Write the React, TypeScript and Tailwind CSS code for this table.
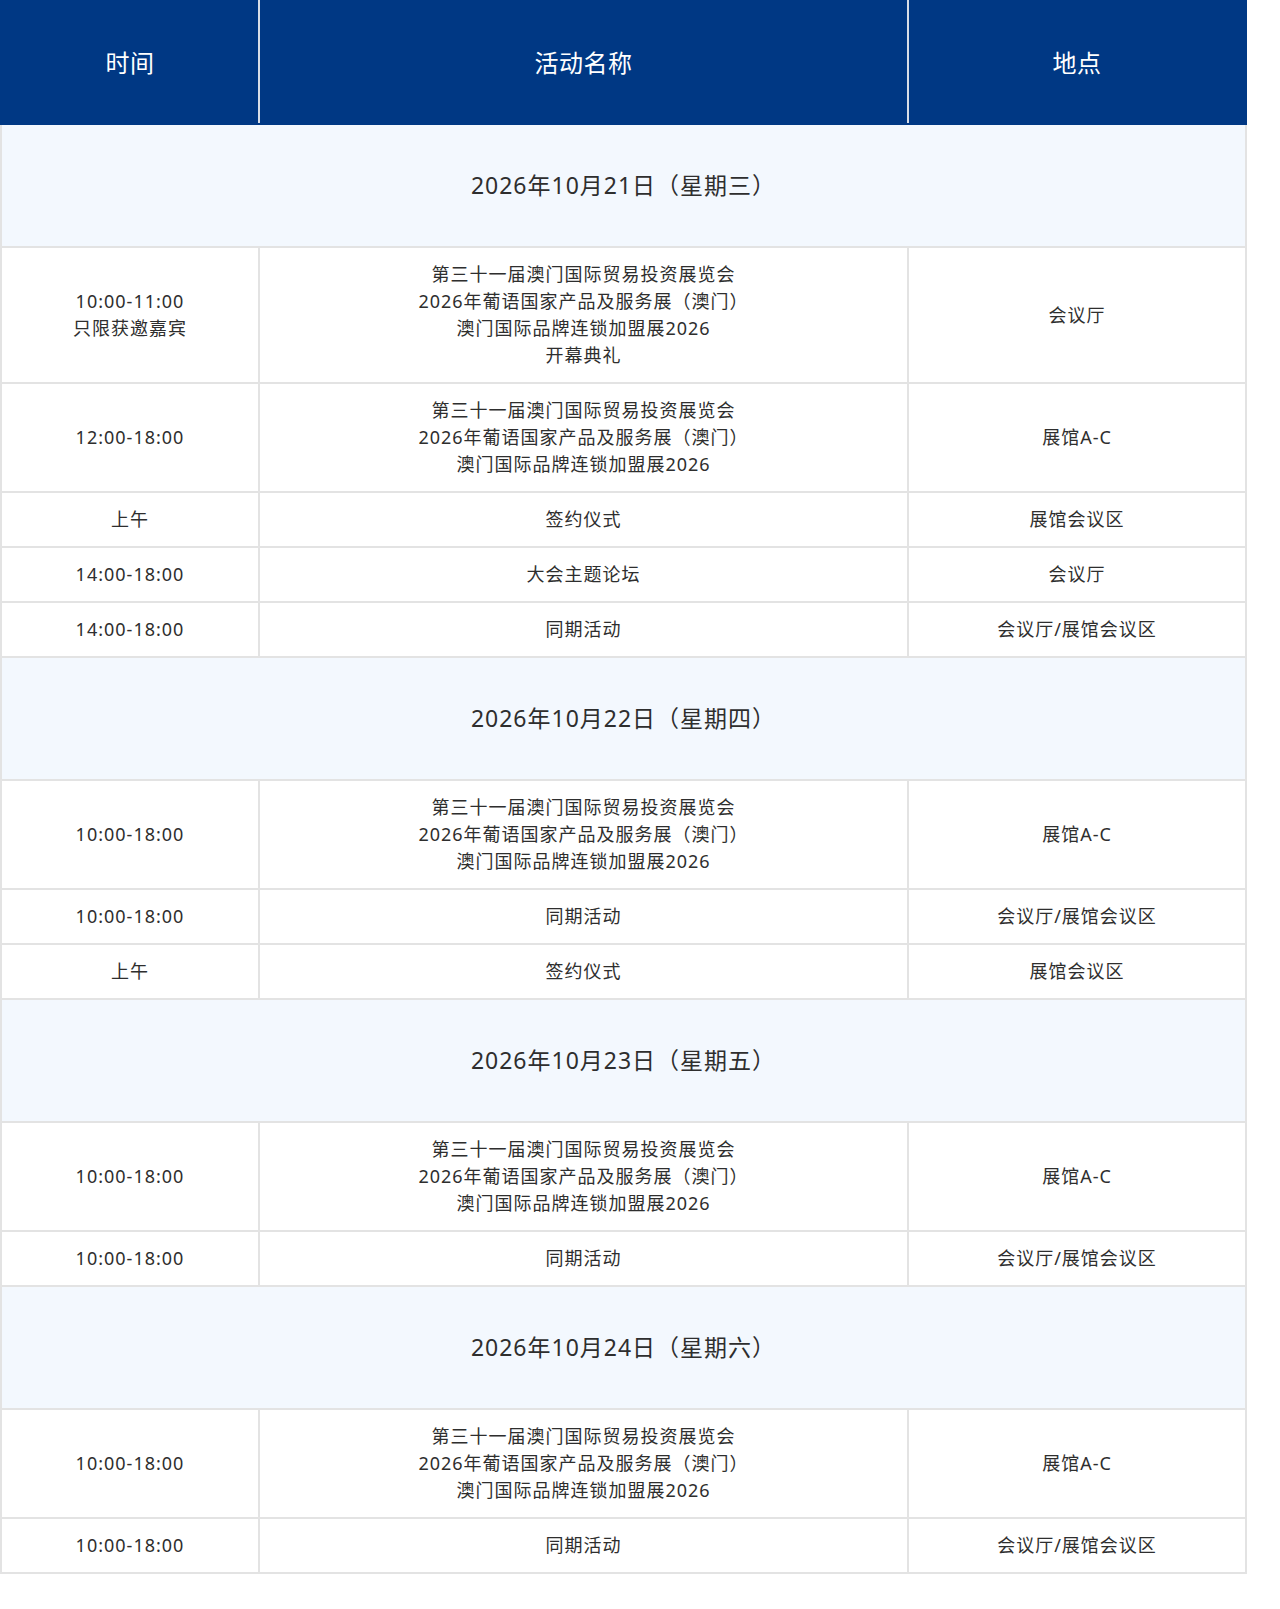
import React from 'react';

type Row = { time: string[]; name: string[]; place: string };
type Day = { date: string; rows: Row[] };

const EXPO = ['第三十一届澳门国际贸易投资展览会', '2026年葡语国家产品及服务展（澳门）', '澳门国际品牌连锁加盟展2026'];

const days: Day[] = [
  {
    date: '2026年10月21日（星期三）',
    rows: [
      { time: ['10:00-11:00', '只限获邀嘉宾'], name: [...EXPO, '开幕典礼'], place: '会议厅' },
      { time: ['12:00-18:00'], name: EXPO, place: '展馆A-C' },
      { time: ['上午'], name: ['签约仪式'], place: '展馆会议区' },
      { time: ['14:00-18:00'], name: ['大会主题论坛'], place: '会议厅' },
      { time: ['14:00-18:00'], name: ['同期活动'], place: '会议厅/展馆会议区' },
    ],
  },
  {
    date: '2026年10月22日（星期四）',
    rows: [
      { time: ['10:00-18:00'], name: EXPO, place: '展馆A-C' },
      { time: ['10:00-18:00'], name: ['同期活动'], place: '会议厅/展馆会议区' },
      { time: ['上午'], name: ['签约仪式'], place: '展馆会议区' },
    ],
  },
  {
    date: '2026年10月23日（星期五）',
    rows: [
      { time: ['10:00-18:00'], name: EXPO, place: '展馆A-C' },
      { time: ['10:00-18:00'], name: ['同期活动'], place: '会议厅/展馆会议区' },
    ],
  },
  {
    date: '2026年10月24日（星期六）',
    rows: [
      { time: ['10:00-18:00'], name: EXPO, place: '展馆A-C' },
      { time: ['10:00-18:00'], name: ['同期活动'], place: '会议厅/展馆会议区' },
    ],
  },
];

const Lines = ({ lines }: { lines: string[] }) => (
  <>
    {lines.map((l, i) => (
      <div key={i}>{l}</div>
    ))}
  </>
);

export default function App() {
  const cell = 'border-2 border-[#e3e3e3] px-3 py-[13px] text-center align-middle';
  const head = 'border-2 border-y-[#003884] border-x-[#d8dde6] font-normal';
  return (
    <div className="min-h-[1609px] bg-white font-['Noto_Sans','Noto_Sans_CJK_SC',sans-serif] text-[18px] leading-[27px] tracking-[1px] text-[#2e2e2e]">
      <table className="w-[1247px] table-fixed border-collapse">
        <colgroup>
          <col className="w-[258px]" />
          <col className="w-[649px]" />
          <col />
        </colgroup>
        <thead>
          <tr className="h-[123px] bg-[#003884] text-[24px] tracking-[0.5px] text-white">
            <th className={`${head} border-l-[#003884]`}>时间</th>
            <th className={head}>活动名称</th>
            <th className={`${head} border-r-[#003884]`}>地点</th>
          </tr>
        </thead>
        <tbody>
          {days.map((d) => (
            <React.Fragment key={d.date}>
              <tr className="h-[123px] bg-[#f3f8fe]">
                <td colSpan={3} className="border-2 border-[#e3e3e3] text-center text-[23px]">
                  {d.date}
                </td>
              </tr>
              {d.rows.map((r, i) => (
                <tr key={i}>
                  <td className={cell}>
                    <Lines lines={r.time} />
                  </td>
                  <td className={cell}>
                    <Lines lines={r.name} />
                  </td>
                  <td className={cell}>{r.place}</td>
                </tr>
              ))}
            </React.Fragment>
          ))}
        </tbody>
      </table>
    </div>
  );
}
